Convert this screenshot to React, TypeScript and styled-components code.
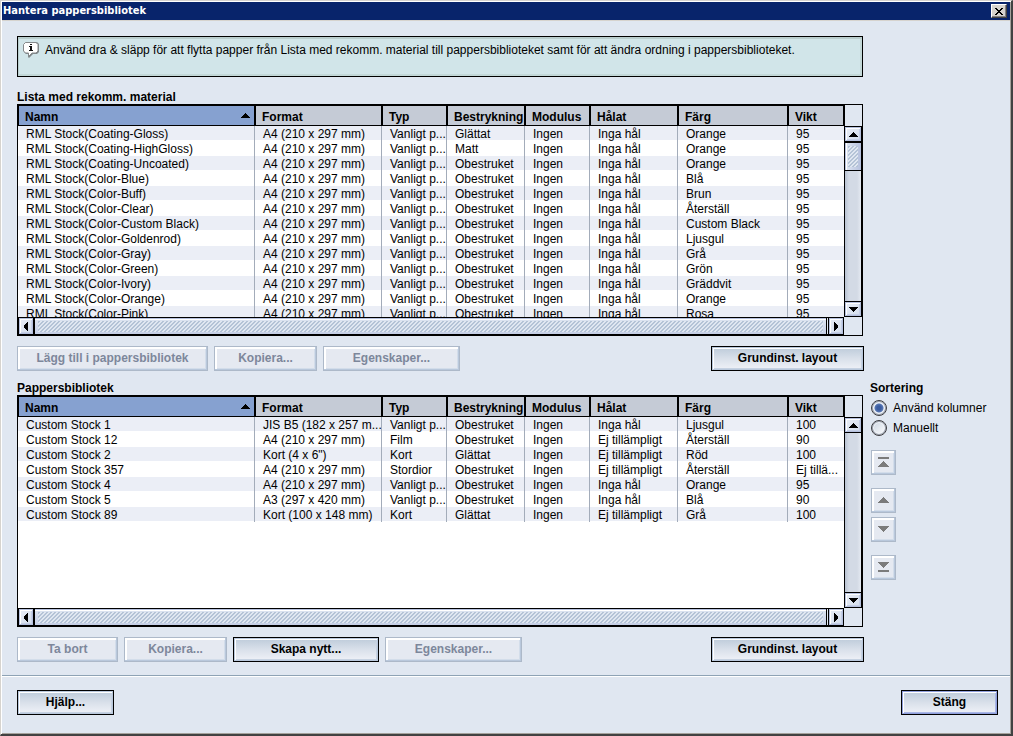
import React, { useState } from "react";
import styled, { createGlobalStyle, css } from "styled-components";

const Global = createGlobalStyle`
  * { box-sizing: border-box; }
  body {
    margin: 0;
    background: #e0e7f1;
    color: #000;
    font: 12px/15px "Liberation Sans", Arial, sans-serif;
  }
  button, input { font: inherit; color: inherit; margin: 0; padding: 0; }
`;

const hatch = css`
  background: linear-gradient(135deg, #b4c3d6 25%, #e0e7f1 25%, #e0e7f1 50%, #b4c3d6 50%, #b4c3d6 75%, #e0e7f1 75%) 0 0 / 4px 4px;
`;

const Window = styled.main`
  display: flex;
  flex-direction: column;
  min-height: 100vh;
  border-style: solid;
  border-width: 1px 2px 2px 1px;
  border-color: #d6d3ce #424242 #424242 #d6d3ce;
  box-shadow: inset 1px 1px #fff, inset -1px -1px #a5a29c;
`;

const TitleBar = styled.header`
  display: flex;
  align-items: center;
  justify-content: space-between;
  height: 18px;
  margin: 1px 1px 0;
  padding: 0 3px 0 1px;
  background: #08246b;
  color: #fff;
  box-shadow: 0 1px #d6d3ce;
`;

const Title = styled.h1`
  margin: 0;
  font: bold 11px/18px "DejaVu Sans Condensed", Tahoma, sans-serif;
`;

const CloseButton = styled.button`
  display: flex;
  align-items: center;
  justify-content: center;
  width: 16px;
  height: 14px;
  border: 1px solid;
  border-color: #fff #424242 #424242 #fff;
  background: #d6d3ce;
  box-shadow: inset -1px -1px #848284;
`;

const Content = styled.div`
  display: grid;
  grid-template-columns: minmax(0, 1fr) 141px;
  gap: 10px 7px;
  padding: 16px 0 13px 16px;
`;

const Message = styled.div`
  display: flex;
  gap: 5px;
  height: 41px;
  margin-bottom: 13px;
  padding: 4px;
  border: 1px solid #000;
  background: #d1e5e9;
  box-shadow: inset 1px 2px #b9cdcd, inset -2px -2px #c3d8d8;

  p { margin: 2px 0 0; }
`;

const Heading = styled.h2`
  margin: 0 0 -1px;
  font-size: 12px;
  line-height: 15px;
`;

const Panel = styled.section`
  grid-column: 1;
`;

const Frame = styled.div`
  display: grid;
  grid-template-columns: minmax(0, 1fr) 18px;
  grid-template-rows: 212px 18px;
  border: 1px solid #000;
`;

const Viewport = styled.div`
  overflow: hidden;
  background: #fff;
`;

const Table = styled.table`
  width: 100%;
  table-layout: fixed;
  border-spacing: 0;
`;

const Col = styled.col<{ $w?: number }>`
  width: ${(p) => (p.$w ? `${p.$w}px` : "auto")};
`;

const HeadCell = styled.th<{ $sorted?: boolean }>`
  height: 21px;
  padding: 4px 0 0 6px;
  border: 1px solid #000;
  background: ${(p) => (p.$sorted ? "#86a1d0" : "#c5cbd6")};
  text-align: left;
  line-height: 15px;
  white-space: nowrap;
  overflow: hidden;
`;

const HeadLabel = styled.span`
  display: flex;
  justify-content: space-between;
  padding-right: 4px;

  svg { margin-top: 3px; }
`;

const Cell = styled.td`
  height: 15px;
  padding: 2px 0 0 8px;
  border-right: 1px solid #a3acba;
  line-height: 13px;
  white-space: nowrap;
  overflow: hidden;

  &:last-child { border-right: 0; }
  tr:nth-child(odd) > & { background: linear-gradient(#ebeef6 14px, #fff 14px); }
`;

const VerticalSide = styled.div`
  display: flex;
  flex-direction: column;
  border-left: 1px solid #000;
`;

const VerticalBar = styled.div`
  display: flex;
  flex-direction: column;
  flex: 1;
  margin-top: 21px;
  border: 1px solid #000;
  border-left: 0;
  background: linear-gradient(90deg, #b9c3d2, #d3dae5 4px, #d3dae5 12px, #e4e9f1);
`;

const HorizontalBar = styled.div`
  display: flex;
  border: 1px solid #000;
`;

const ArrowButton = styled.button<{ $vertical?: boolean }>`
  display: flex;
  align-items: center;
  justify-content: center;
  flex: none;
  width: ${(p) => (p.$vertical ? "auto" : "14px")};
  height: ${(p) => (p.$vertical ? "14px" : "auto")};
  border: 1px solid #b5c0dd;
  background: linear-gradient(135deg, #e8edf6, #d3ddec);
  box-shadow: inset 1px 1px #fff, inset -1px -1px #c5cfe6;
`;

const HorizontalThumb = styled.div`
  flex: 1;
  margin: 0 1px 0 0;
  border: solid #000;
  border-width: 0 1px 0 2px;
  padding: 3px 3px 2px;
  background: linear-gradient(#b5c0dd 1px, #fff 1px, #fff 2px, #dbe3f0 2px, #c5cfe6);

  &::before { content: ""; display: block; height: 100%; ${hatch} }
`;

const ThumbEnd = styled.div`
  width: 1px;
  background: #000;
`;

const VerticalThumb = styled.div`
  height: 30px;
  border: solid #000;
  border-width: 2px 0 1px;
  padding: 3px;
  background: linear-gradient(90deg, #b5c0dd 1px, #fff 1px, #fff 2px, #dbe3f0 2px, #b5c0dd);

  &::before { content: ""; display: block; height: 100%; ${hatch} }
`;

const EndLine = styled.div<{ $push?: boolean }>`
  height: 1px;
  margin-top: ${(p) => (p.$push ? "auto" : "0")};
  background: #000;
`;

const ButtonRow = styled.div`
  display: flex;
  gap: 6px;
  margin: 10px -1px 0 0;
`;

const PushButton = styled.button<{ $w: number; $end?: boolean; $primary?: boolean }>`
  width: ${(p) => p.$w}px;
  height: 25px;
  margin-left: ${(p) => (p.$end ? "auto" : "0")};
  border: 1px solid #000;
  background: linear-gradient(#bccad9, #d9e0ea 50%, #f0f2f8);
  box-shadow:
    inset 0 0 0 1px ${(p) => (p.$primary ? "#8f9fdc" : "#b9c8dc")},
    inset 2px 2px #fff,
    inset -2px -2px ${(p) => (p.$primary ? "#a9b6e6" : "#c6d2e2")};
  font-weight: bold;
  line-height: 15px;

  &:disabled {
    border-color: #adb9c9;
    background: #e5e9f1;
    color: #7d879b;
    box-shadow: inset -1px -1px #b9c8dc, inset 2px 2px #fff, inset -2px -2px #d3ddea;
  }
`;

const SortingColumn = styled.aside`
  grid-column: 2;
`;

const Sorting = styled.fieldset`
  margin: 0;
  padding: 0;
  border: 0;

  legend { padding: 0 0 2px; font-weight: bold; line-height: 15px; }
`;

const Option = styled.label`
  display: flex;
  align-items: center;
  gap: 6px;
  height: 20px;
  padding-left: 1px;
`;

const Radio = styled.input`
  appearance: none;
  width: 16px;
  height: 16px;
  border: 1px solid #3c3c40;
  border-radius: 50%;
  background: linear-gradient(135deg, #c9d3e0, #fff);
  box-shadow: inset 0 0 0 1px #9aa1ad, inset 0 0 0 2px #f2f5fa;

  &:checked {
    background: radial-gradient(circle, #3a5ca0 2px, #5877b4 4px, #e3ebf5 5px);
  }
`;

const MoveButtons = styled.div`
  display: flex;
  flex-direction: column;
  align-items: flex-start;
  gap: 13px;
  padding: 12px 0 0 1px;
`;

const MovePair = styled.div`
  display: flex;
  flex-direction: column;
  gap: 4px;
`;

const MoveButton = styled.button`
  display: flex;
  align-items: center;
  justify-content: center;
  width: 25px;
  height: 25px;
  border: 1px solid #adb9c9;
  background: #e5e9f1;
  box-shadow: inset -1px -1px #b9c8dc, inset 2px 2px #fff, inset -2px -2px #d3ddea;
`;

const Footer = styled.footer`
  display: flex;
  justify-content: space-between;
  margin: 0 1px;
  padding: 14px 12px 16px 15px;
  border-top: 1px solid #8ea3b5;
  box-shadow: inset 0 1px #fff;
`;

type Direction = "up" | "down" | "left" | "right";

const arrows: Record<Direction, string> = {
  up: "M4 0h1v1h1v1h1v1h1v1h1v1H0V4h1V3h1V2h1V1h1z",
  down: "M0 0h9v1H8v1H7v1H6v1H5v1H4V4H3V3H2V2H1V1H0z",
  left: "M4 0v9H3V8H2V7H1V6H0V3h1V2h1V1h1V0z",
  right: "M0 0v9h1V8h1V7h1V6h1V3H3V2H2V1H1V0z",
};

function Arrow({ dir }: { dir: Direction }) {
  const flat = dir === "up" || dir === "down";
  return (
    <svg width={flat ? 9 : 4} height={flat ? 5 : 9} aria-hidden="true">
      <path d={arrows[dir]} />
    </svg>
  );
}

function MoveIcon({ down, bar }: { down?: boolean; bar?: boolean }) {
  return (
    <svg width="11" height="11" fill="#7b7b7b" aria-hidden="true">
      {down ? (
        <path d={bar ? "M0 0h11v1h-1v1H9v1H8v1H7v1H6v1H5V5H4V4H3V3H2V2H1V1H0zM0 8h11v2H0z" : "M0 2h11v1h-1v1H9v1H8v1H7v1H6v1H5V7H4V6H3V5H2V4H1V3H0z"} />
      ) : (
        <path d={bar ? "M0 0h11v2H0zM5 4h1v1h1v1h1v1h1v1h1v1h1v1H0V9h1V8h1V7h1V6h1V5h1z" : "M5 2h1v1h1v1h1v1h1v1h1v1h1v1H0V7h1V6h1V5h1V4h1V3h1z"} />
      )}
    </svg>
  );
}

function InfoIcon() {
  return (
    <svg width="18" height="18" viewBox="0 0 18 18" aria-hidden="true">
      <path d="M4 1h11l2 2v8l-2 2h-4l-4 4-1-1v-3H4l-2-2V3z" fill="#7f8688" />
      <path d="M3.500 1.500h10.500l2 2v6.500l-2 2h-4l-3.500 3.500v-3.500h-3l-2-2v-6.500z" fill="#fff" stroke="#85898b" />
      <path d="M8 3h2v1H8zM7 5h3v4h1v1H7V9h1V6H7z" fill="#111" />
    </svg>
  );
}

const columns: { name: string; width?: number }[] = [
  { name: "Namn" },
  { name: "Format", width: 127 },
  { name: "Typ", width: 65 },
  { name: "Bestrykning", width: 78 },
  { name: "Modulus", width: 65 },
  { name: "Hålat", width: 88 },
  { name: "Färg", width: 110 },
  { name: "Vikt", width: 56 },
];

const a4 = "A4 (210 x 297 mm)";
const plain = "Vanligt p...";

const recommended = [
  ["Coating-Gloss", "Glättat", "Orange"],
  ["Coating-HighGloss", "Matt", "Orange"],
  ["Coating-Uncoated", "Obestruket", "Orange"],
  ["Color-Blue", "Obestruket", "Blå"],
  ["Color-Buff", "Obestruket", "Brun"],
  ["Color-Clear", "Obestruket", "Återställ"],
  ["Color-Custom Black", "Obestruket", "Custom Black"],
  ["Color-Goldenrod", "Obestruket", "Ljusgul"],
  ["Color-Gray", "Obestruket", "Grå"],
  ["Color-Green", "Obestruket", "Grön"],
  ["Color-Ivory", "Obestruket", "Gräddvit"],
  ["Color-Orange", "Obestruket", "Orange"],
  ["Color-Pink", "Obestruket", "Rosa"],
].map(([name, coating, color]) => [`RML Stock(${name})`, a4, plain, coating, "Ingen", "Inga hål", color, "95"]);

const library = [
  ["Custom Stock 1", "JIS B5 (182 x 257 m...", plain, "Obestruket", "Ingen", "Inga hål", "Ljusgul", "100"],
  ["Custom Stock 12", a4, "Film", "Obestruket", "Ingen", "Ej tillämpligt", "Återställ", "90"],
  ["Custom Stock 2", "Kort (4 x 6\")", "Kort", "Glättat", "Ingen", "Ej tillämpligt", "Röd", "100"],
  ["Custom Stock 357", a4, "Stordior", "Obestruket", "Ingen", "Ej tillämpligt", "Återställ", "Ej tillä..."],
  ["Custom Stock 4", a4, plain, "Obestruket", "Ingen", "Inga hål", "Orange", "95"],
  ["Custom Stock 5", "A3 (297 x 420 mm)", plain, "Obestruket", "Ingen", "Inga hål", "Blå", "90"],
  ["Custom Stock 89", "Kort (100 x 148 mm)", "Kort", "Glättat", "Ingen", "Ej tillämpligt", "Grå", "100"],
];

function StockTable({ rows, labelId, thumb }: { rows: string[][]; labelId: string; thumb?: boolean }) {
  return (
    <Frame>
      <Viewport>
        <Table aria-labelledby={labelId}>
          <colgroup>
            {columns.map((c) => <Col key={c.name} $w={c.width} />)}
          </colgroup>
          <thead>
            <tr>
              {columns.map((c, i) => (
                <HeadCell key={c.name} $sorted={i === 0} scope="col">
                  {i === 0 ? <HeadLabel>{c.name}<Arrow dir="up" /></HeadLabel> : c.name}
                </HeadCell>
              ))}
            </tr>
          </thead>
          <tbody>
            {rows.map((row) => (
              <tr key={row[0]}>
                {row.map((value, i) => <Cell key={i}>{value}</Cell>)}
              </tr>
            ))}
          </tbody>
        </Table>
      </Viewport>
      <VerticalSide>
        <VerticalBar>
          <ArrowButton $vertical aria-label="Rulla uppåt"><Arrow dir="up" /></ArrowButton>
          {thumb ? <VerticalThumb /> : <EndLine />}
          <EndLine $push />
          <ArrowButton $vertical aria-label="Rulla nedåt"><Arrow dir="down" /></ArrowButton>
        </VerticalBar>
      </VerticalSide>
      <HorizontalBar>
        <ArrowButton aria-label="Rulla åt vänster"><Arrow dir="left" /></ArrowButton>
        <HorizontalThumb />
        <ThumbEnd />
        <ArrowButton aria-label="Rulla åt höger"><Arrow dir="right" /></ArrowButton>
      </HorizontalBar>
    </Frame>
  );
}

export default function App() {
  const [mode, setMode] = useState("columns");
  return (
    <>
      <Global />
      <Window>
        <TitleBar>
          <Title>Hantera pappersbibliotek</Title>
          <CloseButton aria-label="Stäng fönstret">
            <svg width="8" height="7" aria-hidden="true">
              <path d="M0 0h2v1h1v1h2V1h1V0h2v1H7v1H6v1H5v1h1v1h1v1h1v1H6V6H5V5H3v1H2v1H0V6h1V5h1V4h1V3H2V2H1V1H0z" />
            </svg>
          </CloseButton>
        </TitleBar>
        <Content>
          <Panel>
            <Message>
              <InfoIcon />
              <p>Använd dra &amp; släpp för att flytta papper från Lista med rekomm. material till pappersbiblioteket samt för att ändra ordning i pappersbiblioteket.</p>
            </Message>
            <Heading id="recommended">Lista med rekomm. material</Heading>
            <StockTable rows={recommended} labelId="recommended" thumb />
            <ButtonRow>
              <PushButton $w={191} disabled>Lägg till i pappersbibliotek</PushButton>
              <PushButton $w={103} disabled>Kopiera...</PushButton>
              <PushButton $w={137} disabled>Egenskaper...</PushButton>
              <PushButton $w={153} $end>Grundinst. layout</PushButton>
            </ButtonRow>
          </Panel>
          <Panel>
            <Heading id="library">Pappersbibliotek</Heading>
            <StockTable rows={library} labelId="library" />
            <ButtonRow>
              <PushButton $w={101} disabled>Ta bort</PushButton>
              <PushButton $w={103} disabled>Kopiera...</PushButton>
              <PushButton $w={146}>Skapa nytt...</PushButton>
              <PushButton $w={137} disabled>Egenskaper...</PushButton>
              <PushButton $w={153} $end>Grundinst. layout</PushButton>
            </ButtonRow>
          </Panel>
          <SortingColumn>
            <Sorting>
              <legend>Sortering</legend>
              <Option>
                <Radio type="radio" name="sort" checked={mode === "columns"} onChange={() => setMode("columns")} />
                Använd kolumner
              </Option>
              <Option>
                <Radio type="radio" name="sort" checked={mode === "manual"} onChange={() => setMode("manual")} />
                Manuellt
              </Option>
            </Sorting>
            <MoveButtons>
              <MoveButton disabled aria-label="Flytta överst"><MoveIcon bar /></MoveButton>
              <MovePair>
                <MoveButton disabled aria-label="Flytta upp"><MoveIcon /></MoveButton>
                <MoveButton disabled aria-label="Flytta ned"><MoveIcon down /></MoveButton>
              </MovePair>
              <MoveButton disabled aria-label="Flytta nederst"><MoveIcon down bar /></MoveButton>
            </MoveButtons>
          </SortingColumn>
        </Content>
        <Footer>
          <PushButton $w={97}>Hjälp...</PushButton>
          <PushButton $w={97} $primary>Stäng</PushButton>
        </Footer>
      </Window>
    </>
  );
}
